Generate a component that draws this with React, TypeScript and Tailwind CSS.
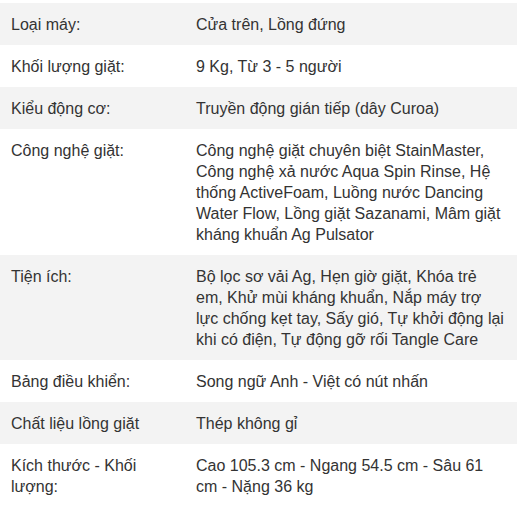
import React from 'react';

type Spec = { label: string; value: string };

const specs: Spec[] = [
  { label: 'Loại máy:', value: 'Cửa trên, Lồng đứng' },
  { label: 'Khối lượng giặt:', value: '9 Kg, Từ 3 - 5 người' },
  { label: 'Kiểu động cơ:', value: 'Truyền động gián tiếp (dây Curoa)' },
  {
    label: 'Công nghệ giặt:',
    value:
      'Công nghệ giặt chuyên biệt StainMaster, Công nghệ xả nước Aqua Spin Rinse, Hệ thống ActiveFoam, Luồng nước Dancing Water Flow, Lồng giặt Sazanami, Mâm giặt kháng khuẩn Ag Pulsator',
  },
  {
    label: 'Tiện ích:',
    value:
      'Bộ lọc sơ vải Ag, Hẹn giờ giặt, Khóa trẻ em, Khử mùi kháng khuẩn, Nắp máy trợ lực chống kẹt tay, Sấy gió, Tự khởi động lại khi có điện, Tự động gỡ rối Tangle Care',
  },
  { label: 'Bảng điều khiển:', value: 'Song ngữ Anh - Việt có nút nhấn' },
  { label: 'Chất liệu lồng giặt', value: 'Thép không gỉ' },
  { label: 'Kích thước - Khối lượng:', value: 'Cao 105.3 cm - Ngang 54.5 cm - Sâu 61 cm - Nặng 36 kg' },
];

const App: React.FC = () => {
  return (
    <div className="min-h-screen bg-white pt-[3px] font-['Liberation_Sans',Arial,sans-serif] text-[16px] leading-[21px] text-[#333]">
      <div className="w-[517px]">
        {specs.map((spec, i) => (
          <div
            key={spec.label}
            className={`grid grid-cols-[185px_1fr] ${i % 2 === 0 ? 'bg-[#f3f3f3]' : 'bg-white'}`}
          >
            <div className="py-[10.5px] pl-[11px] pr-[11px]">{spec.label}</div>
            <div className="py-[10.5px] pl-[11px] pr-[12px]">{spec.value}</div>
          </div>
        ))}
      </div>
    </div>
  );
};

export default App;
